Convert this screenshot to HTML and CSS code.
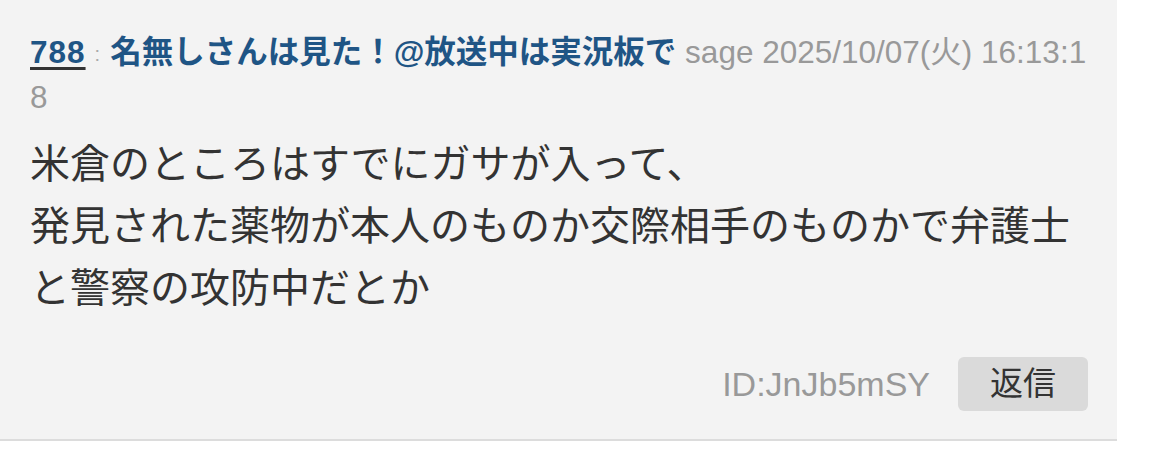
FILE: index.html
```html
<!DOCTYPE html>
<html>
	<head>
		<title>788</title>
		<link rel="stylesheet" href="styles.css">
	</head>
	<body>
		<div class="post">
			<div class="head">
				<a class="num" href="#788">788</a><span class="colon">:</span><span class="name">名無しさんは見た！@放送中は実況板で</span> <span class="date">sage 2025/10/07(火) 16:13:18</span>
			</div>
			<div class="msg">
				米倉のところはすでにガサが入って、<br>
				発見された薬物が本人のものか交際相手のものかで弁護士と警察の攻防中だとか
			</div>
			<div class="foot">
				<span class="id">ID:JnJb5mSY</span>
				<span class="reply">返信</span>
			</div>
		</div>
	</body>
</html>
```
FILE: styles.css
```css
body {
	margin: 0;
	background: #fff;
	font-family: "Liberation Sans", "Noto Sans CJK JP", sans-serif;
}
.post {
	width: 1058px;
	padding: 31px 29px 0 30px;
	background: #f3f3f3;
	border-bottom: 2px solid #dcdcdc;
}
.head {
	font-size: 31.5px;
	line-height: 43px;
	word-break: break-all;
	color: #999;
}
.num {
	color: #1f5585;
	font-weight: bold;
	letter-spacing: 1px;
	text-decoration: underline;
	text-decoration-color: #333;
	text-underline-offset: 4px;
}
.colon {
	font-size: 20px;
	color: #aaa;
	margin: 0 10px 0 9px;
	vertical-align: 2px;
}
.name {
	color: #1f5585;
	font-weight: bold;
}
.msg {
	margin-top: 14px;
	font-size: 40px;
	line-height: 62px;
	color: #333;
	word-break: break-all;
}
.foot {
	display: flex;
	justify-content: flex-end;
	align-items: center;
	gap: 28px;
	margin-top: 38px;
	padding-bottom: 28px;
}
.id {
	font-size: 34px;
	color: #999;
}
.reply {
	background: #dadada;
	border-radius: 6px;
	width: 130px;
	height: 54px;
	line-height: 54px;
	text-align: center;
	font-size: 33px;
	color: #333;
}
```
